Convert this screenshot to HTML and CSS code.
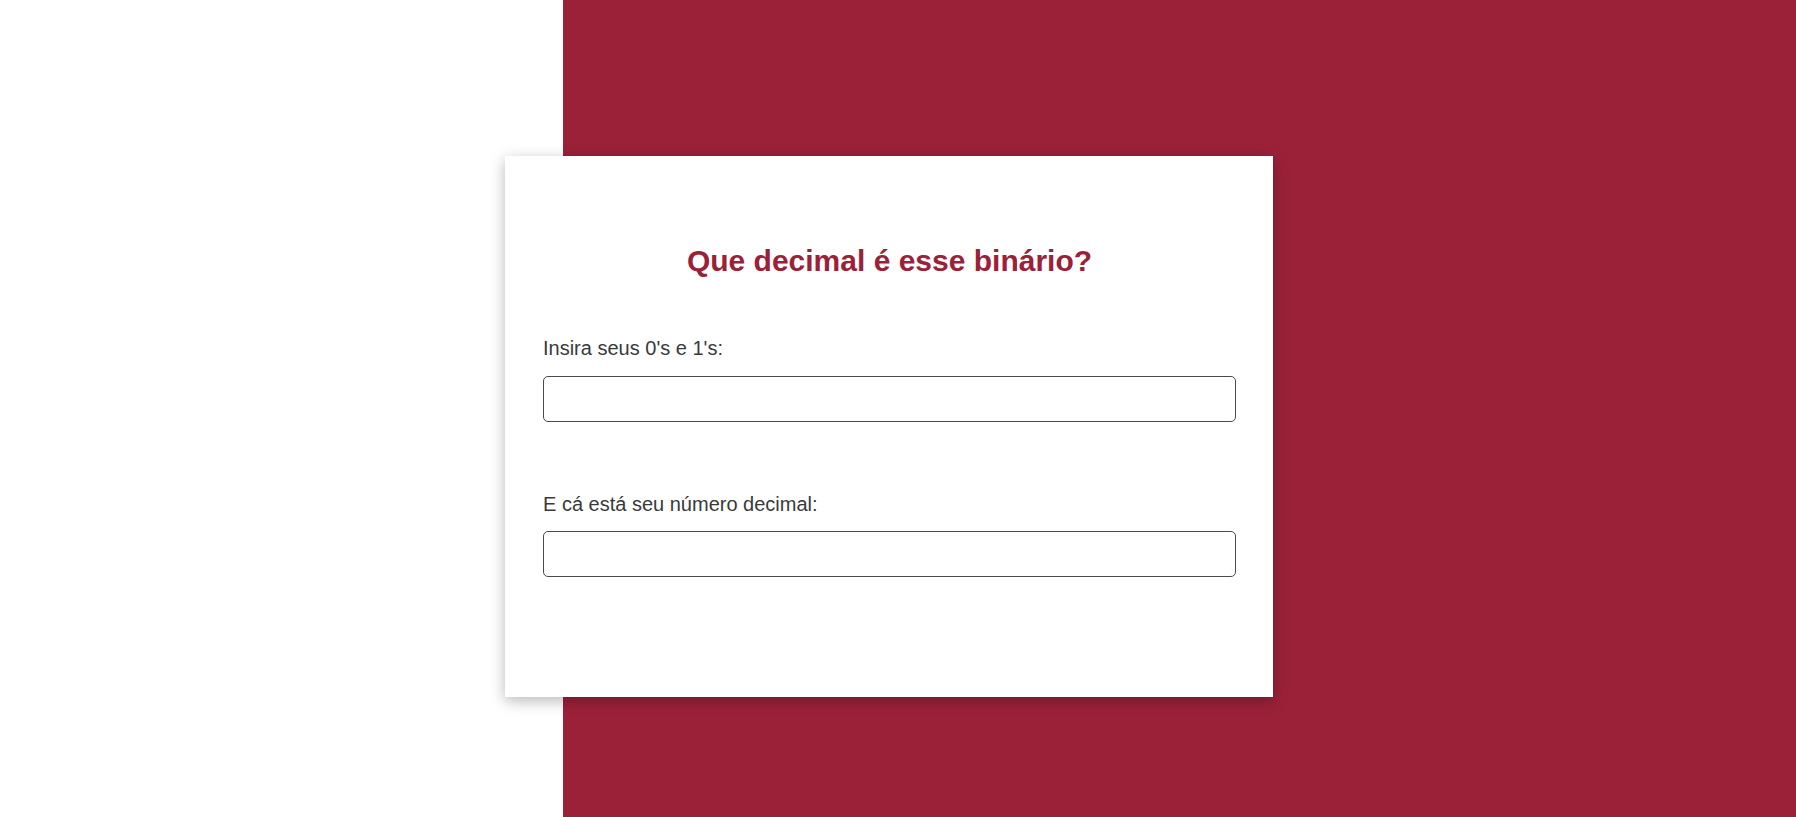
FILE: index.html
```html
<!DOCTYPE html>
<html lang="pt-BR">
<head>
<meta charset="utf-8">
<title>Que decimal é esse binário?</title>
<link rel="stylesheet" href="styles.css">
</head>
<body>
<main class="page">
  <section class="card">
    <h1 class="card-title">Que decimal é esse binário?</h1>
    <form class="converter">
      <label class="field">
        <span class="field-label">Insira seus 0's e 1's:</span>
        <input class="field-input" type="text">
      </label>
      <label class="field field-result">
        <span class="field-label">E cá está seu número decimal:</span>
        <input class="field-input" type="text" readonly>
      </label>
    </form>
  </section>
</main>
</body>
</html>
```

FILE: styles.css
```css
html, body {
  margin: 0;
  padding: 0;
  height: 100%;
}

body {
  font-family: "Liberation Sans", Arial, sans-serif;
  background: linear-gradient(to right, #ffffff 0, #ffffff 563px, #9b2139 563px, #9b2139 100%);
  overflow: hidden;
}

.page {
  display: flex;
  align-items: flex-start;
  padding: 156px 0 0 505px;
  box-sizing: border-box;
  min-height: 100%;
}

.card {
  width: 768px;
  height: 541px;
  box-sizing: border-box;
  background: #ffffff;
  padding: 87px 37px 0 38px;
  box-shadow: 0 4px 14px rgba(0, 0, 0, 0.28);
}

.card-title {
  margin: 0;
  font-size: 30px;
  line-height: 36px;
  font-weight: 700;
  color: #9b2139;
  text-align: center;
}

.converter {
  display: flex;
  flex-direction: column;
  margin-top: 57px;
  gap: 70px;
}

.field {
  display: flex;
  flex-direction: column;
  gap: 16px;
}

.field-result {
  gap: 15px;
}

.field-label {
  font-size: 20px;
  line-height: 24px;
  color: #3a3a3a;
}

.field-input {
  display: block;
  width: 693px;
  height: 46px;
  box-sizing: border-box;
  margin: 0;
  border: 1px solid #4a4a4a;
  border-radius: 5px;
  background: #ffffff;
  font-family: inherit;
  font-size: 18px;
  padding: 0 10px;
  outline: none;
}
```
